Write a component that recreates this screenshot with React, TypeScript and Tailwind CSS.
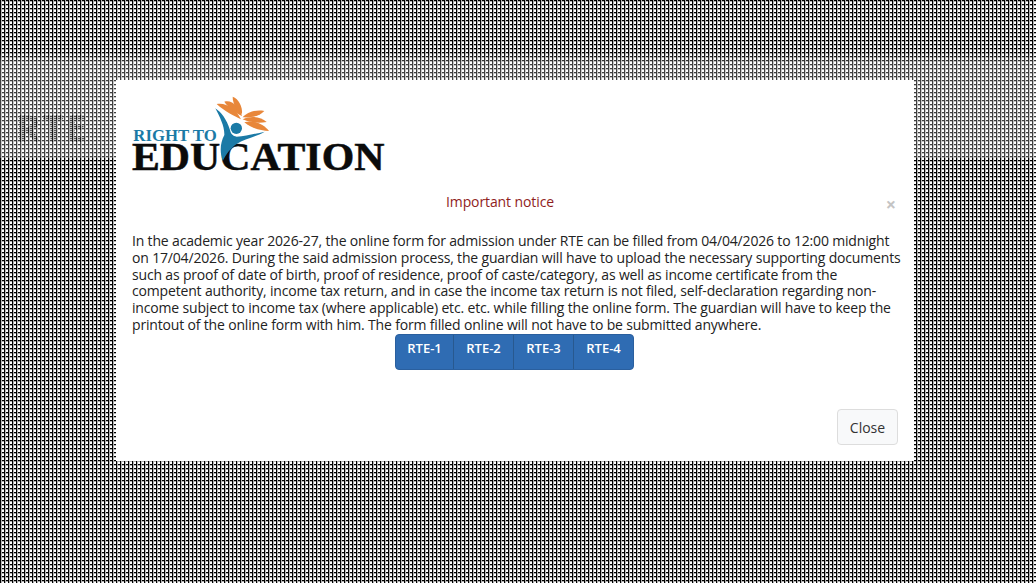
export default function App() {
  const buttons = ["RTE-1", "RTE-2", "RTE-3", "RTE-4"];

  return (
    <div className="relative h-[583px] w-full overflow-hidden bg-white font-['Open_Sans',sans-serif] bg-[linear-gradient(to_right,#000_1px,#b0b0b0_1px,#b0b0b0_2px,transparent_2px),linear-gradient(to_bottom,#000_1px,#b0b0b0_1px,#b0b0b0_2px,transparent_2px)] bg-[length:4px_4px]">
      {/* page behind the overlay, only the header band shows through */}
      <div className="absolute left-0 right-0 top-[52px] h-[106px] bg-gradient-to-b from-white/0 to-white/25 to-[10%] pt-[58px] pl-[16px]">
        <div className="w-fit text-[37px] leading-[36px] font-bold tracking-[2px] text-transparent opacity-60 bg-clip-text bg-[linear-gradient(to_right,#000_1px,#b0b0b0_1px,#b0b0b0_2px,transparent_2px),linear-gradient(to_bottom,#000_1px,#b0b0b0_1px,#b0b0b0_2px,transparent_2px)] bg-[length:4px_4px]">
          RTE
        </div>
      </div>

      <div className="absolute left-[116px] top-[80px] flex h-[381px] w-[798px] flex-col bg-white">
        <svg viewBox="0 0 870 330" className="block h-[110px] w-[290px] shrink-0">
          <text x="52" y="182" fontFamily="Liberation Serif" fontWeight="700" fontSize="48" fill="#1b7aa6" textLength="250" lengthAdjust="spacingAndGlyphs">RIGHT TO</text>
          <text x="48" y="270" fontFamily="Liberation Serif" fontWeight="700" fontSize="120" fill="#0b0b0b" stroke="#0b0b0b" strokeWidth="1.5" textLength="757" lengthAdjust="spacingAndGlyphs">EDUCATION</text>
          <path d="M298 85C316 97 332 118 342 150C345 162 350 168 362 170C390 170 420 160 446 155C418 172 385 176 362 192C342 206 330 224 320 243C311 215 312 190 325 165C326 140 312 112 298 85Z" fill="#1b7aa6" />
          <circle cx="361" cy="145" r="17" fill="#1b7aa6" />
          <path d="M302 72C330 66 362 88 375 118C355 108 326 94 302 72Z" fill="#e8873a" />
          <path d="M325 65C348 58 372 82 378 108C362 100 338 86 325 65Z" fill="#e8873a" />
          <path d="M350 50C368 56 380 80 378 102C364 92 350 74 350 50Z" fill="#e8873a" />
          <path d="M380 112C392 96 420 88 445 93C432 108 405 114 380 112Z" fill="#e8873a" />
          <path d="M380 118C405 106 434 110 452 126C428 130 402 128 380 118Z" fill="#e8873a" />
          <path d="M385 127C410 118 442 132 459 153C432 152 405 144 385 127Z" fill="#e8873a" />
        </svg>

        <div className="relative mt-[3px] text-center text-[14px] leading-[17px] tracking-[-0.1px] text-[#8f1d1d]">
          <span className="ml-[-30px]">Important notice</span>
          <span className="absolute right-[18px] top-[1px] text-[18px] font-bold leading-[20px] text-[#c4c4c4]">×</span>
        </div>

        <p className="mt-[23px] px-[16px] text-[14px] leading-[16.8px] tracking-[-0.17px] whitespace-nowrap text-[#222]">
          In the academic year 2026-27, the online form for admission under RTE can be filled from 04/04/2026 to 12:00 midnight<br />
          on 17/04/2026. During the said admission process, the guardian will have to upload the necessary supporting documents<br />
          such as proof of date of birth, proof of residence, proof of caste/category, as well as income certificate from the<br />
          competent authority, income tax return, and in case the income tax return is not filed, self-declaration regarding non-<br />
          income subject to income tax (where applicable) etc. etc. while filling the online form. The guardian will have to keep the<br />
          printout of the online form with him. The form filled online will not have to be submitted anywhere.
        </p>

        <div className="ml-[279px] grid h-[36px] w-[239px] grid-cols-[58px_60px_60px_1fr] rounded-[4px] border border-[#2a5f9e] bg-[#2f6cb3]">
          {buttons.map((b) => (
            <div key={b} className="flex justify-center border-r border-[#28598f] pt-[4px] text-[13px] leading-[18px] font-semibold text-white last:border-r-0">
              {b}
            </div>
          ))}
        </div>

        <div className="mt-auto mb-[16px] mr-[16px] self-end">
          <button className="h-[36px] w-[61px] rounded-[4px] border border-[#ddd] bg-[#f8f9fa] text-[14px] text-[#333]">Close</button>
        </div>
      </div>
    </div>
  );
}
